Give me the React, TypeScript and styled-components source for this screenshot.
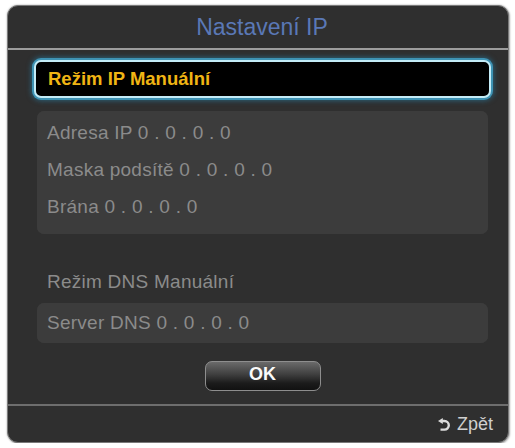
import React from "react";
import styled, { createGlobalStyle } from "styled-components";

const Global = createGlobalStyle`
  html, body { margin: 0; padding: 0; background: #ffffff; }
  body { font-family: "Liberation Sans", Arial, Helvetica, sans-serif; }
`;

const Dialog = styled.div`
  box-sizing: border-box;
  margin: 5px 0 0 7px;
  width: 502px;
  height: 438px;
  background: #2f2f2f;
  border: 1px solid #7a7a7a;
  border-radius: 11px;
  box-shadow: 0 0 2px rgba(0, 0, 0, 0.35), 1px 1px 2px rgba(0, 0, 0, 0.25);
  display: flex;
  flex-direction: column;
  overflow: hidden;
`;

const Header = styled.div`
  height: 42px;
  flex: none;
  display: flex;
  align-items: center;
  justify-content: center;
  padding: 0 17px 0 25px;
  border-bottom: 2px solid #9c9c9c;
  color: #5a78b6;
  font-size: 23px;
`;

const Body = styled.div`
  flex: 1;
  display: flex;
  flex-direction: column;
  padding: 10px 17px 0 26px;
`;

const FocusRow = styled.div`
  box-sizing: border-box;
  height: 38px;
  display: flex;
  align-items: center;
  padding-left: 12px;
  background: #000;
  border: 2px solid #c4ecf7;
  border-radius: 7px;
  box-shadow: 0 0 0 2px #3e93b4, 0 0 5px 3px rgba(40, 130, 170, 0.55);
  color: #f0b514;
  font-size: 18.5px;
  font-weight: bold;
`;

const Panel = styled.div<{ $top: number; $pad: string }>`
  margin: ${(p) => p.$top}px 3px 0 3px;
  padding: ${(p) => p.$pad};
  background: #3c3c3c;
  border-radius: 7px;
  box-shadow: inset 0 0 1px rgba(255, 255, 255, 0.06);
  display: flex;
  flex-direction: column;
`;

const Row = styled.div<{ $h: number }>`
  height: ${(p) => p.$h}px;
  display: flex;
  align-items: center;
  padding-left: 10px;
  color: #8b8b8b;
  font-size: 19px;
  letter-spacing: 0.25px;
  white-space: pre;
`;

const PlainRow = styled(Row)`
  margin: 29px 3px 0 3px;
`;

const ButtonBar = styled.div`
  display: flex;
  justify-content: center;
  margin-top: 18px;
`;

const OkButton = styled.div`
  box-sizing: border-box;
  width: 116px;
  height: 30px;
  display: flex;
  align-items: center;
  justify-content: center;
  border: 1px solid #8e8e8e;
  border-radius: 7px;
  background: linear-gradient(#6a6a6a 0%, #3e3e3e 45%, #1c1c1c 75%, #111 100%);
  color: #fafafa;
  font-size: 18px;
  font-weight: bold;
  padding-bottom: 3px;
`;

const Footer = styled.div`
  height: 37px;
  flex: none;
  margin-top: 13px;
  border-top: 2px solid #6e6e6e;
  display: flex;
  align-items: center;
  justify-content: flex-end;
  gap: 6px;
  padding-right: 15px;
  color: #cfcfcf;
  font-size: 18px;
`;

const BackIcon = () => (
  <svg width="13" height="14" viewBox="0 0 13 14" style={{ display: "block" }}>
    <path
      d="M4 3 H6.5 A4.3 4.3 0 1 1 6.5 11.6 H2.5"
      fill="none"
      stroke="#dcdcdc"
      strokeWidth="2.4"
    />
    <path d="M0 3 L4.8 0 L4.8 6 Z" fill="#dcdcdc" />
  </svg>
);

export default function App() {
  return (
    <>
      <Global />
      <Dialog>
        <Header>Nastavení IP</Header>
        <Body>
          <FocusRow>Režim IP Manuální</FocusRow>
          <Panel $top={13} $pad="3px 0 9px 0">
            <Row $h={37}>Adresa IP 0 . 0 . 0 . 0</Row>
            <Row $h={37}>Maska podsítě 0 . 0 . 0 . 0</Row>
            <Row $h={37}>Brána 0 . 0 . 0 . 0</Row>
          </Panel>
          <PlainRow $h={38}>Režim DNS Manuální</PlainRow>
          <Panel $top={2} $pad="0">
            <Row $h={40}>Server DNS 0 . 0 . 0 . 0</Row>
          </Panel>
          <ButtonBar>
            <OkButton>OK</OkButton>
          </ButtonBar>
        </Body>
        <Footer>
          <BackIcon />
          Zpět
        </Footer>
      </Dialog>
    </>
  );
}
